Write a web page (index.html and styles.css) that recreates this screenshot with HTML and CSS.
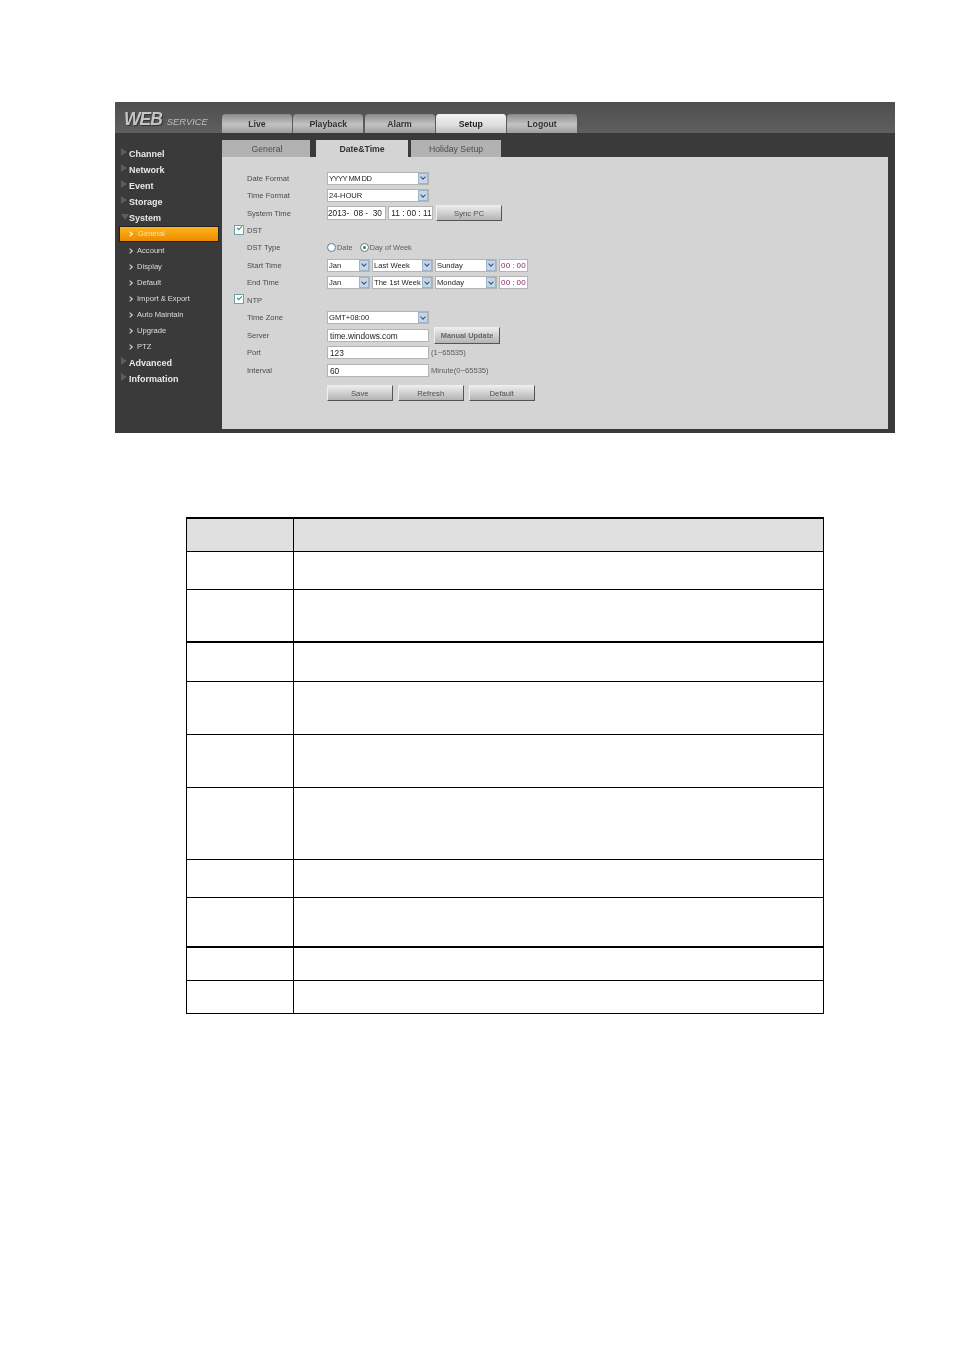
FILE: index.html
```html
<!DOCTYPE html>
<html lang="en">
<head>
  <meta charset="UTF-8" />
  <title>WEB Service Setup</title>
  <link rel="stylesheet" href="styles.css">
</head>
<body>

<div class="shot">
  <div class="topbar">
    <div class="logo"><b>WEB</b><span>SERVICE</span></div>
    <div class="nav">
      <div class="nav-tab">Live</div>
      <div class="nav-tab">Playback</div>
      <div class="nav-tab">Alarm</div>
      <div class="nav-tab active">Setup</div>
      <div class="nav-tab">Logout</div>
    </div>
  </div>

  <div class="main">
    <ul class="side">
      <li class="group">Channel</li>
      <li class="group">Network</li>
      <li class="group">Event</li>
      <li class="group">Storage</li>
      <li class="group open">System</li>
      <li class="sub current">General</li>
      <li class="sub">Account</li>
      <li class="sub">Display</li>
      <li class="sub">Default</li>
      <li class="sub">Import &amp; Export</li>
      <li class="sub">Auto Maintain</li>
      <li class="sub">Upgrade</li>
      <li class="sub">PTZ</li>
      <li class="group">Advanced</li>
      <li class="group">Information</li>
    </ul>

    <div class="content">
      <div class="tabs">
        <div class="tab t-general">General</div>
        <div class="tab t-date active">Date&amp;Time</div>
        <div class="tab t-holiday">Holiday Setup</div>
      </div>

      <div class="panel">
        <div class="row">
          <label>Date Format</label>
          <div class="select w-full tight">YYYY MM DD<i class="arrow"></i></div>
        </div>
        <div class="row">
          <label>Time Format</label>
          <div class="select w-full">24-HOUR<i class="arrow"></i></div>
        </div>
        <div class="row">
          <label>System Time</label>
          <div class="input w-date big">2013- &nbsp;08 - &nbsp;30</div>
          <div class="input w-clock big">&nbsp;11 : 00 : 11</div>
          <button class="btn w-sync">Sync PC</button>
        </div>
        <div class="row check-row">
          <i class="check"></i><label>DST</label>
        </div>
        <div class="row">
          <label>DST Type</label>
          <i class="radio"></i><span class="opt">Date</span>
          <i class="radio on"></i><span class="opt">Day of Week</span>
        </div>
        <div class="row">
          <label>Start Time</label>
          <div class="select w-month">Jan<i class="arrow"></i></div>
          <div class="select w-week">Last Week<i class="arrow"></i></div>
          <div class="select w-day">Sunday<i class="arrow"></i></div>
          <div class="input w-hm">00 : 00</div>
        </div>
        <div class="row">
          <label>End Time</label>
          <div class="select w-month">Jan<i class="arrow"></i></div>
          <div class="select w-week">The 1st Week<i class="arrow"></i></div>
          <div class="select w-day">Monday<i class="arrow"></i></div>
          <div class="input w-hm">00 : 00</div>
        </div>
        <div class="row check-row">
          <i class="check"></i><label>NTP</label>
        </div>
        <div class="row">
          <label>Time Zone</label>
          <div class="select w-full">GMT+08:00<i class="arrow"></i></div>
        </div>
        <div class="row">
          <label>Server</label>
          <div class="input w-full wide">time.windows.com</div>
          <button class="btn w-manual">Manual Update</button>
        </div>
        <div class="row">
          <label>Port</label>
          <div class="input w-full wide">123</div>
          <span class="hint">(1~65535)</span>
        </div>
        <div class="row">
          <label>Interval</label>
          <div class="input w-full wide">60</div>
          <span class="hint">Minute(0~65535)</span>
        </div>
        <div class="actions">
          <button class="btn">Save</button>
          <button class="btn">Refresh</button>
          <button class="btn">Default</button>
        </div>
      </div>
    </div>
  </div>
</div>

<table class="params">
  <tr class="head h33"><th></th><th></th></tr>
  <tr class="h38"><td></td><td></td></tr>
  <tr class="h53 heavy"><td></td><td></td></tr>
  <tr class="h39"><td></td><td></td></tr>
  <tr class="h53"><td></td><td></td></tr>
  <tr class="h53"><td></td><td></td></tr>
  <tr class="h72"><td></td><td></td></tr>
  <tr class="h38"><td></td><td></td></tr>
  <tr class="h50 heavy"><td></td><td></td></tr>
  <tr class="h33"><td></td><td></td></tr>
  <tr class="h33"><td></td><td></td></tr>
</table>

</body>
</html>
```

FILE: styles.css
```css
body {
  margin: 0;
  padding: 102px 0 0 115px;
  background: #fff;
  font-family: "Liberation Sans", Arial, sans-serif;
}
.shot {
  width: 780px;
  height: 331px;
  background: #3a3a3a;
  filter: blur(0.3px);
}

/* top bar */
.topbar {
  height: 31px;
  display: flex;
  background: linear-gradient(#4e4e4e, #5f5f5f);
}
.logo {
  width: 107px;
  padding: 7px 0 0 9px;
  box-sizing: border-box;
  color: #c4c4c4;
  font-style: italic;
  white-space: nowrap;
}
.logo b {
  font-size: 17.5px;
  letter-spacing: -1px;
  text-shadow: 1px 1px 1px #333;
}
.logo span {
  font-size: 9.4px;
  margin-left: 5px;
  color: #bdbdbd;
}
.nav {
  display: flex;
  gap: 1.25px;
  padding-top: 12px;
}
.nav-tab {
  width: 70px;
  height: 19px;
  line-height: 21px;
  text-align: center;
  font-size: 8.7px;
  font-weight: bold;
  color: #333;
  border-radius: 4px 4px 0 0;
  box-shadow: inset 0 1px 0 #8a8a8a;
  background: linear-gradient(#8c8c8c, #c2c2c2 55%, #9e9e9e);
}
.nav-tab.active {
  color: #222;
  box-shadow: inset 0 1px 0 #eee;
  background: linear-gradient(#f4f4f4, #dcdcdc 60%, #bdbdbd);
}

/* side menu */
.main {
  display: flex;
}
.side {
  width: 107px;
  margin: 0;
  padding: 13px 0 0;
  list-style: none;
}
.side li {
  position: relative;
  height: 16px;
  line-height: 16px;
  white-space: nowrap;
}
.group {
  padding-left: 14px;
  color: #e8e8e8;
  font-size: 9px;
  font-weight: bold;
}
.group::before {
  content: "";
  position: absolute;
  left: 6px;
  top: 2px;
  border-left: 6px solid #5c5c5c;
  border-top: 4px solid transparent;
  border-bottom: 4px solid transparent;
}
.group.open {
  margin-bottom: 1px;
}
.group.open::before {
  left: 6px;
  top: 4px;
  border-top: 6px solid #5c5c5c;
  border-left: 4px solid transparent;
  border-right: 4px solid transparent;
  border-bottom: 0;
}
.side .sub {
  padding-left: 22px;
  color: #ddd;
  font-size: 7.6px;
  line-height: 15px;
}
.sub::before {
  content: "";
  position: absolute;
  left: 13px;
  top: 6px;
  width: 3px;
  height: 3px;
  border-top: 1px solid #ddd;
  border-right: 1px solid #ddd;
  transform: rotate(45deg);
}
.side .current {
  height: 14px;
  line-height: 14px;
  margin: 0 4px 1.5px 5px;
  padding-left: 18px;
  color: #f3e3c0;
  background: linear-gradient(#fdb41b, #ee8a00);
  box-shadow: 0 0 0 1px #222;
}
.side .current::before {
  left: 8px;
  top: 5px;
  border-color: #fff;
}

/* tabs and form */
.content {
  width: 673px;
}
.tabs {
  display: flex;
  height: 17px;
  margin-top: 7px;
}
.tab {
  line-height: 18px;
  text-align: center;
  font-size: 8.7px;
  color: #4d4d4d;
  background: #b2b2b2;
}
.t-general { width: 88px; margin-right: 6px; padding-left: 2px; box-sizing: border-box; }
.t-date {
  width: 92px;
  margin-right: 3px;
  font-weight: bold;
  color: #333;
  background: #d4d4d4;
}
.t-holiday { width: 90px; }
.panel {
  width: 665.5px;
  height: 272px;
  box-sizing: border-box;
  padding: 12.5px 0 0 25px;
  background: #d4d4d4;
}
.row {
  display: flex;
  align-items: center;
  gap: 2px;
  height: 17.45px;
  font-size: 7.6px;
  color: #4a4a4a;
}
.row label {
  width: 78px;
}
.check-row label {
  width: auto;
  margin-left: 1px;
}
.check-row .check {
  margin: -2px 0 0 -13px;
}
.check {
  width: 8px;
  height: 8px;
  background: #fff;
  border: 1px solid #7b9ab0;
  position: relative;
}
.check::after {
  content: "";
  position: absolute;
  left: 1.5px;
  top: 0.5px;
  width: 4px;
  height: 2px;
  border-left: 1.3px solid #2aa02a;
  border-bottom: 1.3px solid #2aa02a;
  transform: rotate(-45deg);
}
.radio {
  width: 7px;
  height: 7px;
  margin-right: -1px;
  border: 1px solid #5a7a96;
  border-radius: 50%;
  background: #fff;
  position: relative;
}
.radio.on::after {
  content: "";
  position: absolute;
  left: 2px;
  top: 2px;
  width: 3px;
  height: 3px;
  border-radius: 50%;
  background: #2f8f2f;
}
.opt {
  margin-right: 5px;
  font-size: 7.4px;
  color: #5c5c5c;
}
.select, .input {
  position: relative;
  box-sizing: border-box;
  height: 13px;
  line-height: 14px;
  padding-left: 2px;
  background: #fff;
  color: #222;
  white-space: nowrap;
  overflow: hidden;
  box-shadow: inset 0 0 0 1px #b4b4b4;
}
.tight { letter-spacing: -0.55px; }
.wide {
  padding-left: 3px;
  font-size: 8.3px;
}
.arrow {
  position: absolute;
  right: 1px;
  top: 1px;
  width: 10px;
  height: 11px;
  background: #c6d6ea;
  border: 1px solid #9fb3c9;
  box-sizing: border-box;
}
.arrow::after {
  content: "";
  position: absolute;
  left: 2px;
  top: 1.5px;
  width: 3px;
  height: 3px;
  border-right: 1.2px solid #33506e;
  border-bottom: 1.2px solid #33506e;
  transform: rotate(45deg);
}
.w-full { width: 102px; }
.w-date { width: 59px; padding-left: 1px; }
.w-clock { width: 45px; padding-left: 1px; }
.w-month { width: 43px; }
.w-week { width: 61px; }
.w-day { width: 62px; }
.w-hm {
  width: 29px;
  color: #7a1f6e;
  font-size: 8px;
  word-spacing: -0.5px;
  letter-spacing: 0.2px;
}
.big {
  height: 14px;
  font-size: 8.3px;
  line-height: 15px;
}
.hint {
  color: #5c5c5c;
}
.btn {
  width: 65.5px;
  height: 16px;
  padding: 0;
  font: 7.7px "Liberation Sans", Arial, sans-serif;
  color: #4f4f4f;
  border: 1px solid #555;
  border-top-color: #eee;
  border-left-color: #eee;
  background: linear-gradient(#ececec, #b4b4b4);
}
.w-sync { width: 66px; margin-left: 1px; }
.w-manual { width: 66px; height: 17px; margin-left: 3px; font-size: 7.4px; font-weight: bold; color: #666; }
.actions {
  display: flex;
  gap: 5.5px;
  margin: 6.5px 0 0 80px;
}

/* table below the screenshot */
.params {
  width: 638px;
  margin: 84px 0 0 71px;
  border-collapse: collapse;
  table-layout: fixed;
  border-top: 2px solid #000;
}
.params th, .params td {
  padding: 0;
  border: 1px solid #000;
}
.params th:first-child, .params td:first-child {
  width: 106px;
}
.head th {
  background: #e0e0e0;
}
.heavy td {
  border-bottom-width: 2px;
}
.h33 { height: 33px; }
.h38 { height: 38px; }
.h39 { height: 39px; }
.h50 { height: 50px; }
.h53 { height: 53px; }
.h72 { height: 72px; }
```
